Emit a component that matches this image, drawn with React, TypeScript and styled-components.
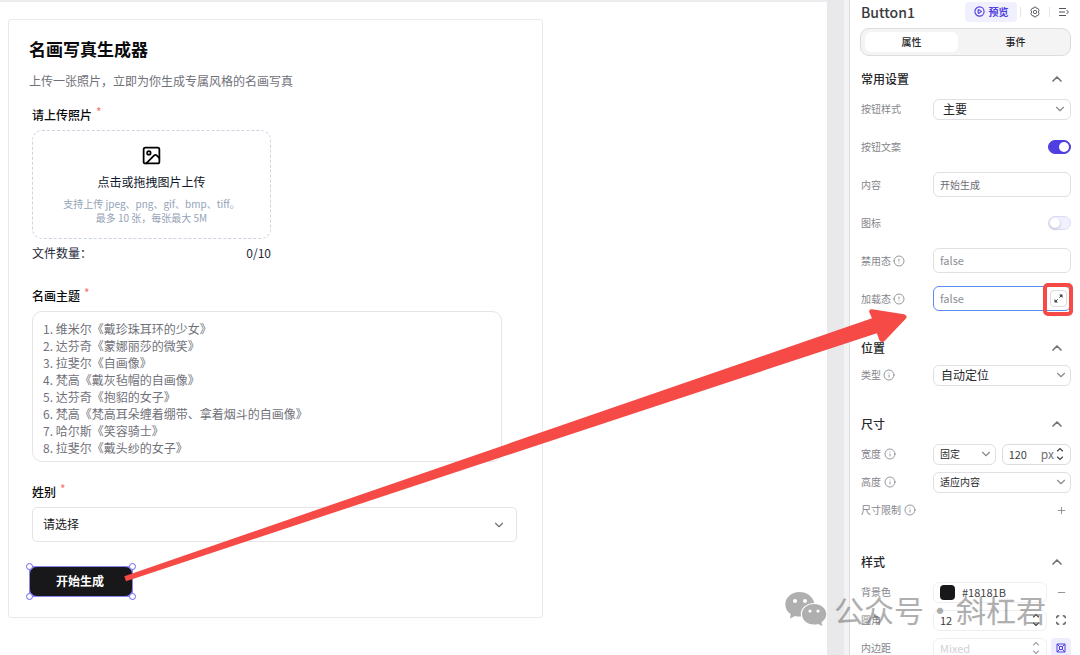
import React from "react";
import styled, { createGlobalStyle, css } from "styled-components";
import { ChevronDown, ChevronUp, CirclePlay, Image as ImageIcon, Info, Minus, Plus } from "lucide-react";

const GlobalStyle = createGlobalStyle`
  *, *::before, *::after { box-sizing: border-box; }
  html, body, #root { height: 100%; }
  body { margin: 0; overflow: hidden; background: #fff; color: #18181b; }
  body, button, input, select, textarea { font-family: "Noto Sans CJK SC", sans-serif; }
  h1, h2, p { margin: 0; }
`;

const Workspace = styled.div`
  position: relative;
  display: flex;
  height: 100%;
  overflow: hidden;
`;

const Canvas = styled.main`
  flex: 1;
  min-width: 0;
  border-top: 2px solid #ececee;
  padding: 17px 8px;
`;

const Gutter = styled.div`
  width: 23px;
  flex: none;
  background: #e9e9eb;
  border-right: 1px solid #dedee0;
  box-shadow: inset -5px 0 #f3f3f4;
`;

const Card = styled.form`
  max-width: 535px;
  border: 1px solid #e8e8ef;
  border-radius: 3px;
  padding: 17px 25px 20px 20px;
`;

const Title = styled.h1`
  font-size: 17px;
  line-height: 24px;
  font-weight: 700;
  color: #09090b;
`;

const Subtitle = styled.p`
  margin-top: 11px;
  font-size: 12px;
  line-height: 18px;
  color: #71717a;
`;

const Field = styled.div<{ $top: number }>`
  margin: ${(p) => p.$top}px 0 0 3px;
`;

const FieldLabel = styled.label`
  display: flex;
  gap: 4px;
  font-size: 12px;
  line-height: 18px;
  font-weight: 500;
  color: #09090b;
`;

const Required = styled.span`
  line-height: 12px;
  color: #f87171;
  font-weight: 400;
`;

const UploadBox = styled.button`
  display: flex;
  flex-direction: column;
  align-items: center;
  width: 239px;
  margin-top: 6px;
  padding: 14px 0 13px;
  border: 1px dashed #cbd5e1;
  border-radius: 10px;
  background: #fff;
`;

const UploadTitle = styled.span`
  margin-top: 7px;
  font-size: 12px;
  line-height: 18px;
  color: #0f172a;
`;

const UploadHint = styled.span`
  margin-top: 6px;
  font-size: 10px;
  line-height: 14px;
  color: #94a3b8;
`;

const CountLine = styled.div`
  display: flex;
  justify-content: space-between;
  width: 239px;
  margin-top: 5px;
  font-size: 12px;
  line-height: 18px;
  color: #1e293b;
`;

const ThemeText = styled.textarea`
  display: block;
  width: 470px;
  max-width: 100%;
  height: 151px;
  margin-top: 6px;
  padding: 8px 10px;
  border: 1px solid #e4e4e7;
  border-radius: 10px;
  resize: none;
  overflow: hidden;
  outline: none;
  font-size: 12px;
  line-height: 17px;
  color: #71717a;
`;

const SelectWrap = styled.span<{ $inset: number }>`
  position: relative;
  display: flex;
  align-items: center;
  flex: 10;
  min-width: 0;
  > svg {
    position: absolute;
    right: ${(p) => p.$inset}px;
    pointer-events: none;
  }
`;

const FormSelect = styled.select`
  width: 100%;
  height: 35px;
  padding: 0 10px 2px;
  appearance: none;
  border: 1px solid #e4e4e7;
  border-radius: 5px;
  background: #fff;
  font-size: 12px;
  color: #18181b;
`;

const FormSelectLine = styled.div`
  display: flex;
  margin-top: 6px;
`;

const Selected = styled.div`
  position: relative;
  display: inline-flex;
  margin-top: 24px;
`;

const SubmitButton = styled.button`
  width: 104px;
  height: 31px;
  padding: 0 2px 2px 0;
  border: 1px solid #6d64e8;
  border-radius: 8px;
  background: #18181b;
  color: #fff;
  font-size: 12px;
  font-weight: 700;
`;

const SelectionFrame = styled.span`
  position: absolute;
  inset: 0;
  border: 1px solid #8b85ee;
  pointer-events: none;
`;

const Handle = styled.i<{ $x: "left" | "right"; $y: "top" | "bottom" }>`
  position: absolute;
  ${(p) => p.$x}: -4px;
  ${(p) => p.$y}: -4px;
  width: 7px;
  height: 7px;
  border: 1px solid #6d64e8;
  border-radius: 50%;
  background: #fff;
`;

const Panel = styled.aside`
  width: 230px;
  flex: none;
  padding: 0 9px 0 11px;
  overflow: hidden;
`;

const PanelHeader = styled.header`
  display: flex;
  align-items: center;
  height: 23px;
`;

const PanelTitle = styled.h2`
  flex: 1;
  font-size: 14px;
  line-height: 22px;
  font-weight: 500;
  color: #3a3a40;
`;

const PreviewButton = styled.button`
  display: flex;
  align-items: center;
  justify-content: center;
  gap: 4px;
  width: 52px;
  height: 20px;
  margin-right: 3px;
  padding: 0;
  border: 0;
  border-radius: 4px;
  background: #f0f0ff;
  color: #4f3fe0;
  font-size: 10px;
  font-weight: 700;
`;

const Divider = styled.span`
  width: 1px;
  height: 10px;
  background: #e4e4e7;
`;

const IconButton = styled.button<{ $active?: boolean }>`
  display: grid;
  place-items: center;
  width: 20px;
  height: 20px;
  padding: 0;
  border: 0;
  border-radius: 4px;
  background: ${(p) => (p.$active ? "#ededff" : "transparent")};
  color: ${(p) => (p.$active ? "#4f3fe0" : "#8b8b91")};
`;

const HeaderTools = styled.div`
  display: flex;
  align-items: center;
  gap: 4px;
  margin-right: -3px;
`;

const Tabs = styled.div`
  display: flex;
  gap: 7px;
  height: 28px;
  margin: 5px 0 0 -1px;
  padding: 3px 4px;
  border: 1px solid #dcdcde;
  border-radius: 9px;
  background: #f4f4f5;
`;

const Tab = styled.button<{ $active?: boolean }>`
  flex: ${(p) => (p.$active ? 12 : 13)};
  padding: 0;
  border: 0;
  border-radius: 6px;
  background: ${(p) => (p.$active ? "#fff" : "transparent")};
  font-size: 10px;
  line-height: 18px;
  font-weight: 500;
  color: #27272a;
`;

const Section = styled.section<{ $top: number }>`
  margin-top: ${(p) => p.$top}px;
`;

const SectionHead = styled.div<{ $gap: number }>`
  display: flex;
  align-items: center;
  justify-content: space-between;
  height: 22px;
  margin-bottom: ${(p) => p.$gap}px;
  padding-right: 6px;
`;

const SectionTitle = styled.h2`
  font-size: 12px;
  line-height: 18px;
  font-weight: 500;
  color: #27272a;
`;

const SectionToggle = styled.button`
  display: grid;
  padding: 0;
  border: 0;
  background: none;
  color: #71717a;
`;

const Row = styled.div<{ $tall?: boolean }>`
  display: flex;
  align-items: center;
  height: ${(p) => (p.$tall ? 38 : 28)}px;
`;

const RowLabel = styled.label<{ $gap?: number }>`
  display: flex;
  align-items: center;
  gap: ${(p) => p.$gap ?? 2}px;
  width: 72px;
  flex: none;
  font-size: 10px;
  line-height: 16px;
  color: #85858b;
`;

const Controls = styled.div<{ $gap?: number }>`
  position: relative;
  display: flex;
  align-items: center;
  justify-content: flex-end;
  gap: ${(p) => p.$gap ?? 0}px;
  flex: 1;
  min-width: 0;
`;

const fieldBox = css`
  border: 1px solid #e0e0e2;
  border-radius: 6px;
  background: #fff;
`;

const PanelSelect = styled.select<{ $size: number; $pad: number }>`
  ${fieldBox}
  width: 100%;
  height: 21px;
  padding: 0 ${(p) => p.$pad}px 1px;
  appearance: none;
  font-size: ${(p) => p.$size}px;
  color: #27272a;
`;

const TextInput = styled.input<{ $focused?: boolean }>`
  ${fieldBox}
  width: 100%;
  height: 25px;
  margin-bottom: 2px;
  padding: 0 6px;
  border-color: ${(p) => (p.$focused ? "#5b8def" : "#e0e0e2")};
  outline: none;
  font-size: ${(p) => (p.value === "false" ? 11 : 10)}px;
  color: ${(p) => (p.value === "false" ? "#8e8e94" : "#6b6b70")};
`;

const ExpandButton = styled.button`
  position: absolute;
  right: 4px;
  display: grid;
  place-items: center;
  width: 17px;
  height: 17px;
  margin-bottom: 2px;
  padding: 0;
  border: 1px solid #dcdce0;
  border-radius: 4px;
  background: #fff;
  color: #3f3f46;
`;

const RedFrame = styled.span`
  position: absolute;
  right: -2px;
  width: 30px;
  height: 33px;
  border: 4px solid #f64a46;
  border-radius: 5px;
  pointer-events: none;
`;

const Switch = styled.input`
  appearance: none;
  width: 23px;
  height: 14px;
  margin: 0;
  border: 1px solid #dedcf3;
  border-radius: 7px;
  background: #f0f0ff;
  &::before {
    content: "";
    display: block;
    width: 10px;
    height: 10px;
    margin: 1px;
    border-radius: 50%;
    background: #fff;
    box-shadow: 0 1px 3px #b9b9cc;
  }
  &:checked { border-color: #4f3fe0; background: #4f3fe0; }
  &:checked::before { margin-left: 10px; box-shadow: none; }
`;

const NumberBox = styled.div<{ $faint?: boolean }>`
  ${fieldBox}
  display: flex;
  align-items: center;
  gap: 2px;
  flex: 9;
  min-width: 0;
  height: 21px;
  padding: 0 6px 0 5px;
  border-color: ${(p) => (p.$faint ? "#efeff1" : "#dcdcde")};
  color: #52525b;
`;

const BareInput = styled.input`
  flex: 1;
  width: 0;
  min-width: 0;
  padding: 0 1px;
  border: 0;
  outline: none;
  background: none;
  font-size: 11px;
  color: #3f3f46;
  &::placeholder { color: #d0d0d4; }
`;

const Unit = styled.span`
  font-size: 12px;
  line-height: 18px;
  color: #71717a;
`;

const Swatch = styled.span`
  width: 15px;
  height: 15px;
  margin: 0 4px 0 1px;
  border-radius: 4px;
  background: #18181b;
`;

const ArrowLayer = styled.svg`
  position: absolute;
  left: 0;
  top: 0;
  pointer-events: none;
`;

const Watermark = styled.div`
  position: absolute;
  right: 34px;
  top: 586px;
  display: flex;
  align-items: center;
  gap: 1px;
  font-size: 30px;
  line-height: 46px;
  font-weight: 400;
  color: #6e6e6e;
  opacity: 0.55;
  pointer-events: none;
  > svg { margin-right: 6px; }
`;

const HintIcon = ({ flipped }: { flipped?: boolean }) => (
  <Info size={12} strokeWidth={1.7} transform={flipped ? "rotate(180)" : undefined} aria-hidden />
);

const Stepper = ({ color = "#3f3f46" }: { color?: string }) => (
  <svg width="8" height="14" viewBox="0 0 8 14" fill="none" stroke={color} strokeWidth="1.2">
    <path d="M1.2 4.2 4 1.5l2.8 2.7M1.2 9.8 4 12.5l2.8-2.7" />
  </svg>
);

const Head = ({ title, gap }: { title: string; gap: number }) => (
  <SectionHead $gap={gap}>
    <SectionTitle>{title}</SectionTitle>
    <SectionToggle type="button" aria-label={`收起${title}`}>
      <ChevronUp size={16} strokeWidth={2.5} />
    </SectionToggle>
  </SectionHead>
);

type PickProps = { id: string; value: string; size: number; pad: number; inset?: number };
const Pick = ({ id, value, size, pad, inset = 3 }: PickProps) => (
  <SelectWrap $inset={inset}>
    <PanelSelect id={id} $size={size} $pad={pad}>
      <option>{value}</option>
    </PanelSelect>
    <ChevronDown size={14} strokeWidth={2} color="#8b8b91" />
  </SelectWrap>
);

const themes = [
  "1. 维米尔《戴珍珠耳环的少女》",
  "2. 达芬奇《蒙娜丽莎的微笑》",
  "3. 拉斐尔《自画像》",
  "4. 梵高《戴灰毡帽的自画像》",
  "5. 达芬奇《抱貂的女子》",
  "6. 梵高《梵高耳朵缠着绷带、拿着烟斗的自画像》",
  "7. 哈尔斯《笑容骑士》",
  "8. 拉斐尔《戴头纱的女子》",
].join("\n");

export default function App() {
  return (
    <Workspace>
      <GlobalStyle />
      <Canvas>
        <Card onSubmit={(e) => e.preventDefault()}>
          <Title>名画写真生成器</Title>
          <Subtitle>上传一张照片，立即为你生成专属风格的名画写真</Subtitle>

          <Field $top={16}>
            <FieldLabel htmlFor="upload">请上传照片 <Required>*</Required></FieldLabel>
            <UploadBox id="upload" type="button">
              <ImageIcon size={21} strokeWidth={2} />
              <UploadTitle>点击或拖拽图片上传</UploadTitle>
              <UploadHint>支持上传 jpeg、png、gif、bmp、tiff。<br />最多 10 张，每张最大 5M</UploadHint>
            </UploadBox>
            <CountLine><span>文件数量：</span><span>0/10</span></CountLine>
          </Field>

          <Field $top={25}>
            <FieldLabel htmlFor="theme">名画主题 <Required>*</Required></FieldLabel>
            <ThemeText id="theme" defaultValue={themes} />
          </Field>

          <Field $top={21}>
            <FieldLabel htmlFor="gender">姓别 <Required>*</Required></FieldLabel>
            <FormSelectLine>
              <SelectWrap $inset={11}>
                <FormSelect id="gender"><option>请选择</option></FormSelect>
                <ChevronDown size={14} strokeWidth={2} color="#71717a" />
              </SelectWrap>
            </FormSelectLine>
          </Field>

          <Selected>
            <SubmitButton type="submit">开始生成</SubmitButton>
            <SelectionFrame>
              <Handle $x="left" $y="top" />
              <Handle $x="right" $y="top" />
              <Handle $x="left" $y="bottom" />
              <Handle $x="right" $y="bottom" />
            </SelectionFrame>
          </Selected>
        </Card>
      </Canvas>
      <Gutter />
      <Panel>
        <PanelHeader>
          <PanelTitle>Button1</PanelTitle>
          <PreviewButton type="button"><CirclePlay size={11} strokeWidth={2.4} />预览</PreviewButton>
          <HeaderTools>
            <Divider />
            <IconButton type="button" aria-label="设置">
              <svg width="12" height="12" viewBox="0 0 12 12" fill="none" stroke="#63636a">
                <path d="M4.900 1.200h2.200l.5 1.300 1.300-.2L10.100 4.200 9.300 6l.8 1.800-1.200 1.900-1.300-.2-.5 1.300H4.900l-.5-1.300-1.300.2-1.200-1.900L2.700 6l-.8-1.800 1.200-1.900 1.300.2z" />
                <circle cx="6" cy="6" r="1.700" />
              </svg>
            </IconButton>
            <Divider />
            <IconButton type="button" aria-label="收起面板">
              <svg width="12" height="12" viewBox="0 0 12 12" fill="none" stroke="#52525b">
                <path d="M1 2.500h7M1 6h6M1 9.500h7M8.500 4l2 2-2 2" />
              </svg>
            </IconButton>
          </HeaderTools>
        </PanelHeader>
        <Tabs role="tablist">
          <Tab type="button" role="tab" aria-selected $active>属性</Tab>
          <Tab type="button" role="tab">事件</Tab>
        </Tabs>

        <Section $top={12}>
          <Head title="常用设置" gap={0} />
          <Row $tall>
            <RowLabel htmlFor="variant">按钮样式</RowLabel>
            <Controls><Pick id="variant" value="主要" size={12} pad={9} inset={4} /></Controls>
          </Row>
          <Row $tall>
            <RowLabel htmlFor="text-on">按钮文案</RowLabel>
            <Controls><Switch id="text-on" type="checkbox" defaultChecked /></Controls>
          </Row>
          <Row $tall>
            <RowLabel htmlFor="content">内容</RowLabel>
            <Controls><TextInput id="content" value="开始生成" readOnly /></Controls>
          </Row>
          <Row $tall>
            <RowLabel htmlFor="icon-on">图标</RowLabel>
            <Controls><Switch id="icon-on" type="checkbox" /></Controls>
          </Row>
          <Row $tall>
            <RowLabel htmlFor="disabled">禁用态<HintIcon flipped /></RowLabel>
            <Controls><TextInput id="disabled" value="false" readOnly /></Controls>
          </Row>
          <Row $tall>
            <RowLabel htmlFor="loading">加载态<HintIcon flipped /></RowLabel>
            <Controls>
              <TextInput id="loading" value="false" readOnly $focused />
              <ExpandButton type="button" aria-label="展开">
                <svg width="9" height="9" viewBox="0 0 9 9" fill="none" stroke="currentColor">
                  <path d="M5.300 3.700 8 1M3.700 5.300 1 8" />
                  <path d="M5 .5h3.500V4zM.5 5v3.500H4z" fill="currentColor" stroke="none" />
                </svg>
              </ExpandButton>
              <RedFrame />
            </Controls>
          </Row>
        </Section>

        <Section $top={19}>
          <Head title="位置" gap={2} />
          <Row>
            <RowLabel htmlFor="position">类型<HintIcon /></RowLabel>
            <Controls><Pick id="position" value="自动定位" size={12} pad={7} /></Controls>
          </Row>
        </Section>

        <Section $top={24}>
          <Head title="尺寸" gap={5} />
          <Row>
            <RowLabel htmlFor="width-mode" $gap={3}>宽度<HintIcon /></RowLabel>
            <Controls $gap={6}>
              <Pick id="width-mode" value="固定" size={10} pad={6} />
              <NumberBox>
                <BareInput aria-label="宽度数值" defaultValue="120" />
                <Unit>px</Unit>
                <Stepper />
              </NumberBox>
            </Controls>
          </Row>
          <Row>
            <RowLabel htmlFor="height-mode" $gap={3}>高度<HintIcon /></RowLabel>
            <Controls><Pick id="height-mode" value="适应内容" size={10} pad={6} /></Controls>
          </Row>
          <Row>
            <RowLabel as="span" $gap={3}>尺寸限制<HintIcon /></RowLabel>
            <Controls>
              <IconButton type="button" aria-label="添加尺寸限制"><Plus size={11} strokeWidth={2} /></IconButton>
            </Controls>
          </Row>
        </Section>

        <Section $top={27}>
          <Head title="样式" gap={5} />
          <Row>
            <RowLabel htmlFor="background">背景色</RowLabel>
            <Controls $gap={4}>
              <NumberBox $faint>
                <Swatch />
                <BareInput id="background" defaultValue="#18181B" />
              </NumberBox>
              <IconButton type="button" aria-label="移除背景色"><Minus size={11} strokeWidth={2} /></IconButton>
            </Controls>
          </Row>
          <Row>
            <RowLabel htmlFor="radius">圆角</RowLabel>
            <Controls $gap={4}>
              <NumberBox $faint>
                <BareInput id="radius" defaultValue="12" />
                <Stepper />
              </NumberBox>
              <IconButton type="button" aria-label="四角圆角">
                <svg width="10" height="10" viewBox="0 0 10 10" fill="none" stroke="#3f3f46" strokeWidth="1.200">
                  <path d="M.8 3.200V2Q.8.800 2 .800h1.200M6.800.800H8Q9.200.800 9.200 2v1.200M9.200 6.800V8Q9.200 9.200 8 9.200H6.800M3.200 9.200H2Q.8 9.200.8 8V6.800" />
                </svg>
              </IconButton>
            </Controls>
          </Row>
          <Row>
            <RowLabel htmlFor="padding">内边距</RowLabel>
            <Controls $gap={4}>
              <NumberBox $faint>
                <BareInput id="padding" placeholder="Mixed" />
                <Stepper color="#a1a1aa" />
              </NumberBox>
              <IconButton type="button" aria-label="四边内边距" $active>
                <svg width="10" height="10" viewBox="0 0 10 10" fill="none" stroke="currentColor">
                  <path d="M1 1h8v8H1zM3.500 3.500h3v3h-3zM1 1l2.500 2.500M9 1 6.500 3.500M1 9l2.500-2.500M9 9 6.500 6.500" />
                </svg>
              </IconButton>
            </Controls>
          </Row>
        </Section>
      </Panel>

      <ArrowLayer width="920" height="600" viewBox="0 0 920 600" aria-hidden>
        <path
          d="M124.300 576.200 872 318.300 869.200 312Q868.800 309 872 309.300L904 314.300Q908.500 316 905.500 319L885 340.500Q882 343.500 879.500 340.500L876.800 333.200 126 581.200z"
          fill="#f64a46"
        />
      </ArrowLayer>
      <Watermark aria-hidden>
        <svg width="42" height="36" viewBox="0 0 42 36" fill="currentColor">
          <path
            fillRule="evenodd"
            d="M14.500 1C6.500 1 .300 6.500.300 13.500c0 4 2 7.300 5.400 9.600L5 27.500l5-2.600c2 .600 4 .800 6 .700C14.500 17.500 21 12 29.300 12 27.800 5.500 21.800 1 14.500 1zM10 8a2 2 0 1 1 0 4 2 2 0 0 1 0-4zm10 0a2 2 0 1 1 0 4 2 2 0 0 1 0-4z"
          />
          <path
            fillRule="evenodd"
            d="M29 13c-7 0-12 4.700-12 10.300S22 33.500 29 33.500c1.500 0 3-.200 4.300-.600l4 2.100-.800-3.700c2.900-2 4.800-4.800 4.800-8C41.300 17.700 36 13 29 13zM25 18.500a1.600 1.600 0 1 1 0 3.200 1.600 1.600 0 0 1 0-3.200zm8 0a1.600 1.600 0 1 1 0 3.200 1.600 1.600 0 0 1 0-3.200z"
          />
        </svg>
        <span>公众号</span>
        <span>·</span>
        <span>斜杠君</span>
      </Watermark>
    </Workspace>
  );
}
